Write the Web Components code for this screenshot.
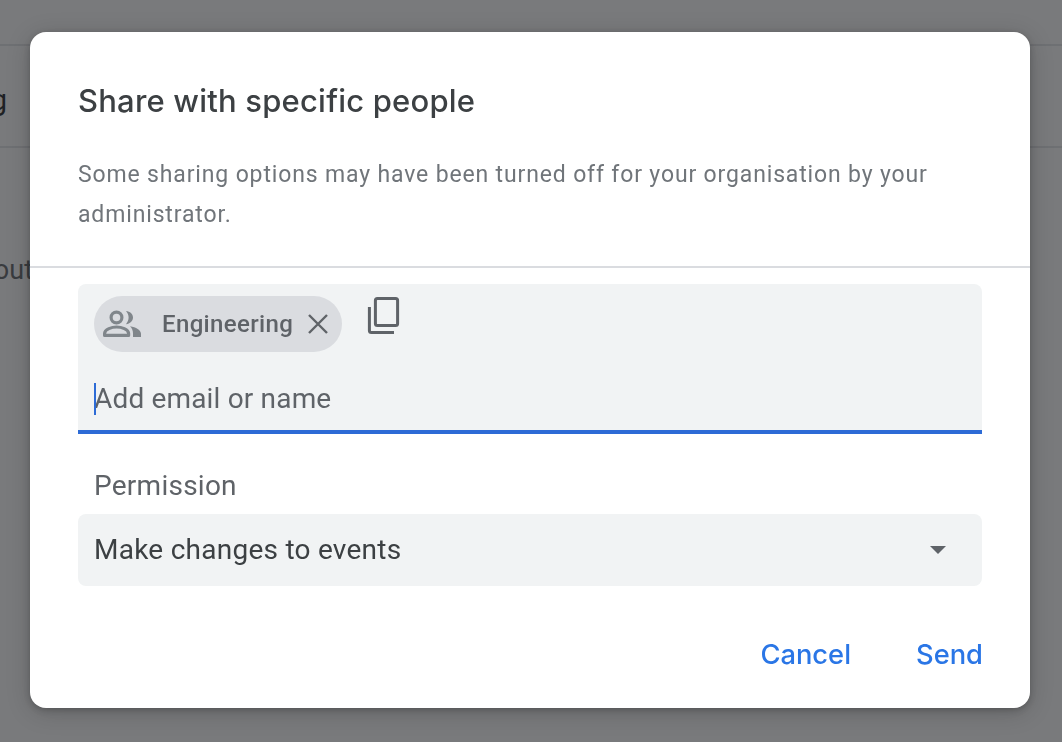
<!DOCTYPE html>
<html>
<head>
<meta charset="utf-8">
<title>Share with specific people</title>
<style>
  html, body { margin: 0; height: 100%; overflow: hidden; background: #fff; }
  body { font-family: Roboto, "Liberation Sans", sans-serif; }
</style>
</head>
<body>
<page-behind></page-behind>
<scrim-layer>
  <share-dialog heading="Share with specific people">
    <span slot="note">Some sharing options may have been turned off for your organisation by your administrator.</span>
    <people-field placeholder="Add email or name">
      <person-chip>Engineering</person-chip>
    </people-field>
    <permission-select label="Permission" value="Make changes to events"></permission-select>
    <text-button slot="actions">Cancel</text-button>
    <text-button slot="actions">Send</text-button>
  </share-dialog>
</scrim-layer>

<script>
class PageBehind extends HTMLElement {
  constructor() {
    super();
    this.attachShadow({ mode: "open" });
    this.shadowRoot.innerHTML = `
      <style>
        :host { display: block; height: 100%; overflow: hidden; color: #202124; }
        .tabs { margin-top: 44px; height: 104px; box-sizing: border-box; border-top: 2px solid #e4e5e8; border-bottom: 2px solid #e4e5e8; display: flex; align-items: center; }
        .tabs span { margin: 8px 0 0 -84px; font-size: 29px; }
        .line { margin-top: 104px; margin-left: -36px; font-size: 27px; line-height: 36px; color: #5f6368; }
      </style>
      <div class="tabs"><span>Setting</span></div>
      <div class="line">about</div>
    `;
  }
}

class ScrimLayer extends HTMLElement {
  constructor() {
    super();
    this.attachShadow({ mode: "open" });
    this.shadowRoot.innerHTML = `
      <style>
        :host { position: fixed; inset: 0; display: flex; align-items: flex-start; padding: 32px 0 0 30px; background: rgba(32,33,36,.6); }
      </style>
      <slot></slot>
    `;
  }
}

class ShareDialog extends HTMLElement {
  constructor() {
    super();
    this.attachShadow({ mode: "open" });
  }

  connectedCallback() {
    this.shadowRoot.innerHTML = `
      <style>
        :host { display: block; width: 1000px; height: 676px; background: #fff; border-radius: 16px; box-shadow: 0 2px 6px rgba(0,0,0,.2), 0 4px 24px rgba(0,0,0,.2); }
        header { box-sizing: border-box; height: 236px; padding: 48px 48px 0; border-bottom: 2px solid #dadce0; }
        h2 { margin: 0; font: 500 31px/42px Inter, Roboto, sans-serif; letter-spacing: .2px; color: #3c4043; }
        p { margin: 33px 0 0; font-size: 23px; line-height: 40px; letter-spacing: .85px; color: #70757a; }
        .body { padding: 16px 48px 0; }
        .actions { display: flex; justify-content: flex-end; gap: 65px; padding: 49px 47px 0 48px; }
      </style>
      <header>
        <h2>${this.getAttribute("heading")}</h2>
        <p><slot name="note"></slot></p>
      </header>
      <div class="body"><slot></slot></div>
      <div class="actions"><slot name="actions"></slot></div>
    `;
  }
}

class PeopleField extends HTMLElement {
  constructor() {
    super();
    this.attachShadow({ mode: "open" });
  }

  connectedCallback() {
    this.shadowRoot.innerHTML = `
      <style>
        :host { display: block; box-sizing: border-box; height: 150px; padding: 12px 16px 0; background: #f1f3f4; border-radius: 8px 8px 0 0; border-bottom: 4px solid #2d6bd6; }
        .chips { display: flex; gap: 25px; height: 56px; }
        svg { width: 34px; height: 40px; fill: none; stroke: #5f6368; stroke-width: 3; }
        .input { position: relative; margin-top: 27px; font-size: 28px; line-height: 40px; letter-spacing: .17px; color: #5f6368; }
        .caret { position: absolute; left: 0; top: 4px; width: 2px; height: 32px; background: #2d6bd6; }
      </style>
      <div class="chips">
        <slot></slot>
        <svg viewBox="0 0 34 40"><rect x="8.400" y="2.400" width="22.200" height="27.200" rx="2"/><path d="M2.400 11V34.600a2 2 0 0 0 2 2H27"/></svg>
      </div>
      <div class="input"><span class="caret"></span>${this.getAttribute("placeholder")}</div>
    `;
  }
}

class PersonChip extends HTMLElement {
  constructor() {
    super();
    this.attachShadow({ mode: "open" });
    this.shadowRoot.innerHTML = `
      <style>
        :host { display: inline-flex; align-items: center; box-sizing: border-box; height: 56px; padding: 0 8px 0 7px; border-radius: 28px; background: #dadce0; color: #5f6368; font-size: 24px; font-weight: 500; letter-spacing: .36px; }
        .people { width: 40px; height: 28px; margin-right: 21px; color: #80868b; }
        .x { width: 32px; height: 32px; margin-left: 9px; stroke: #5f6368; stroke-width: 2.4; fill: none; }
      </style>
      <svg class="people" viewBox="0 0 40 28">
        <circle cx="15.500" cy="7.500" r="5.400" fill="none" stroke="currentColor" stroke-width="3.200"/>
        <path d="M3.600 25.400v-2c0-4.200 7.400-6.400 12-6.400s12 2.200 12 6.400v2z" fill="none" stroke="currentColor" stroke-width="3.200" stroke-linejoin="round"/>
        <path d="M25 1c4 .3 7 3 7 6.600s-3 6.300-7 6.600c1.600-2 2.600-4 2.600-6.600S26.600 3 25 1z" fill="currentColor"/>
        <path d="M29 16.300c6 1 11 3.800 11 7.500V27h-8v-3.500c0-2.800-1-5.200-3-7.200z" fill="currentColor"/>
      </svg>
      <slot></slot>
      <svg class="x" viewBox="0 0 32 32"><path d="M7 7l18 18M25 7L7 25"/></svg>
    `;
  }
}

class PermissionSelect extends HTMLElement {
  constructor() {
    super();
    this.attachShadow({ mode: "open" });
  }

  connectedCallback() {
    this.shadowRoot.innerHTML = `
      <style>
        :host { display: block; margin-top: 32px; font-size: 28px; letter-spacing: .25px; }
        label { display: block; padding-left: 16px; line-height: 40px; color: #5f6368; }
        .box { display: flex; align-items: center; justify-content: space-between; box-sizing: border-box; height: 72px; margin-top: 8px; padding: 0 36px 2px 16px; background: #f1f3f4; border-radius: 8px; color: #3c4043; }
        .arrow { width: 0; height: 0; margin-top: 2px; border: 8px solid transparent; border-top: 8px solid #5f6368; border-bottom: 0; }
      </style>
      <label>${this.getAttribute("label")}</label>
      <div class="box"><span>${this.getAttribute("value")}</span><span class="arrow"></span></div>
    `;
  }
}

class TextButton extends HTMLElement {
  constructor() {
    super();
    this.attachShadow({ mode: "open" });
    this.shadowRoot.innerHTML = `
      <style>
        :host { display: inline-block; font: 500 27.300px/40px Inter, Roboto, sans-serif; color: #2a76e6; }
      </style>
      <slot></slot>
    `;
  }
}

customElements.define("page-behind", PageBehind);
customElements.define("scrim-layer", ScrimLayer);
customElements.define("share-dialog", ShareDialog);
customElements.define("people-field", PeopleField);
customElements.define("person-chip", PersonChip);
customElements.define("permission-select", PermissionSelect);
customElements.define("text-button", TextButton);
</script>
</body>
</html>
